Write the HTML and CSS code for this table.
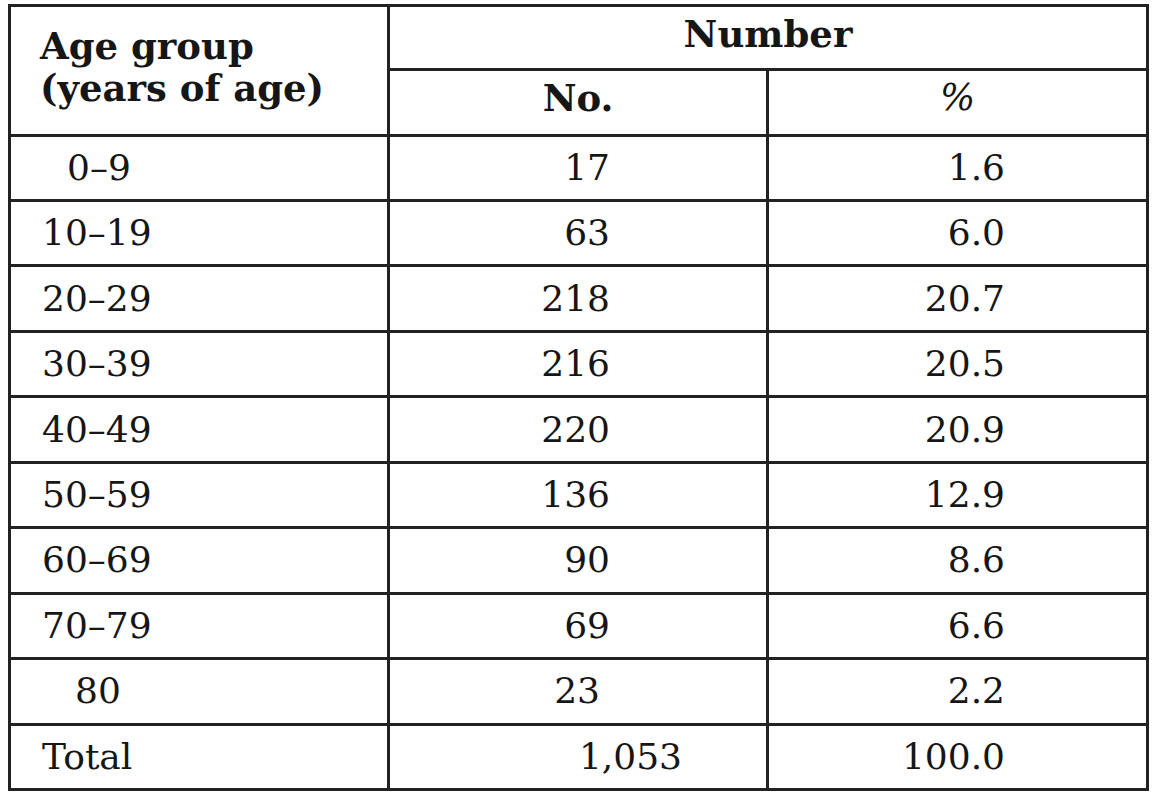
FILE: index.html
```html
<!DOCTYPE html>
<html lang="en">
<head>
<meta charset="utf-8">
<title>Age groups</title>
<link rel="stylesheet" href="styles.css">
</head>
<body>
<div class="table">
  <div class="cell head head-age">Age group<br>(years of age)</div>
  <div class="cell head head-number">Number</div>
  <div class="cell head head-sub">No.</div>
  <div class="cell head head-sub pct">%</div>

  <div class="cell age indent-a">0–9</div><div class="cell num">17</div><div class="cell pc">1.6</div>
  <div class="cell age">10–19</div><div class="cell num">63</div><div class="cell pc">6.0</div>
  <div class="cell age">20–29</div><div class="cell num">218</div><div class="cell pc">20.7</div>
  <div class="cell age">30–39</div><div class="cell num">216</div><div class="cell pc">20.5</div>
  <div class="cell age">40–49</div><div class="cell num">220</div><div class="cell pc">20.9</div>
  <div class="cell age">50–59</div><div class="cell num">136</div><div class="cell pc">12.9</div>
  <div class="cell age">60–69</div><div class="cell num">90</div><div class="cell pc">8.6</div>
  <div class="cell age">70–79</div><div class="cell num">69</div><div class="cell pc">6.6</div>
  <div class="cell age indent-b">80</div><div class="cell num num-23">23</div><div class="cell pc">2.2</div>
  <div class="cell age">Total</div><div class="cell num num-total">1,053</div><div class="cell pc">100.0</div>
</div>
</body>
</html>
```

FILE: styles.css
```css
html, body {
  margin: 0;
  padding: 0;
  background: #ffffff;
}

body {
  padding: 4px 0 0 8px;
  font-family: "DejaVu Serif", "Liberation Serif", serif;
  color: #161616;
}

.table {
  display: grid;
  width: 1141px;
  box-sizing: border-box;
  grid-template-columns: 376px 376px 377px;
  grid-template-rows: 61px 62.6px repeat(10, 62.45px);
  gap: 3px;
  padding: 3px;
  background: #222222;
}

.cell {
  background: #ffffff;
  display: flex;
  align-items: center;
  font-size: 36px;
  line-height: 42px;
}

.head {
  font-weight: bold;
  font-size: 37px;
}

.head-age {
  grid-row: 1 / span 2;
  padding-left: 29px;
  padding-bottom: 6px;
}

.head-number {
  grid-column: 2 / span 2;
  justify-content: center;
  padding-bottom: 8px;
}

.head-sub {
  justify-content: center;
  padding-bottom: 8px;
}

.pct {
  font-weight: normal;
  font-style: italic;
}

.age {
  padding-left: 31px;
}

.indent-a { padding-left: 56px; }
.indent-b { padding-left: 64px; }

.num {
  justify-content: flex-end;
  padding-right: 156px;
}

.num-23 { padding-right: 166px; }
.num-total { padding-right: 84px; }

.pc {
  justify-content: flex-end;
  padding-right: 141px;
}
```
